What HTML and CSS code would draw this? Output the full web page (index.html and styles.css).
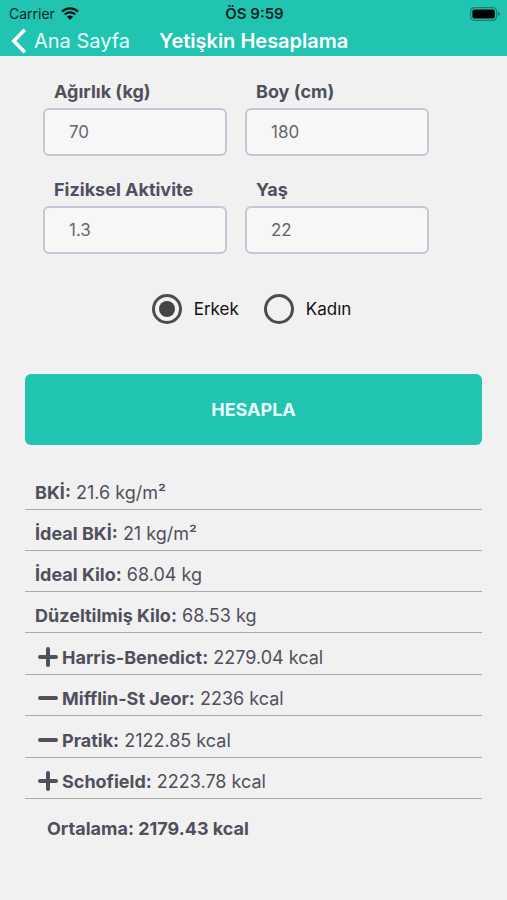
FILE: index.html
```html
<!DOCTYPE html>
<html lang="tr">
<head>
<meta charset="utf-8">
<meta name="viewport" content="width=device-width, initial-scale=1">
<title>Yetişkin Hesaplama</title>
<link rel="stylesheet" href="styles.css">
</head>
<body>
<header class="top">
  <div class="status">
    <div class="carrier">
      <span>Carrier</span>
      <svg class="wifi" viewBox="0 0 18 13" aria-hidden="true">
        <path d="M1 4.6a11.5 11.5 0 0 1 16 0M3.8 7.5a7.5 7.5 0 0 1 10.4 0" fill="none" stroke="#0c1514" stroke-width="2.2"/>
        <path d="M9 13 5.9 9.8a4.4 4.4 0 0 1 6.2 0z" fill="#0c1514"/>
      </svg>
    </div>
    <span class="time">ÖS 9:59</span>
    <svg class="battery" viewBox="0 0 30 14" aria-hidden="true">
      <rect x=".6" y=".6" width="26" height="12.8" rx="4" fill="none" stroke="#128273" stroke-width="1.2"/>
      <rect x="2.4" y="2.4" width="22.4" height="9.2" rx="2" fill="#000"/>
      <path d="M28 4.8q1.8.6 1.8 2.2T28 9.2z" fill="#128273"/>
    </svg>
  </div>
  <nav class="nav">
    <a class="back" href="#">
      <svg class="chevron" viewBox="0 0 16 26" aria-hidden="true"><path d="M13.8 1.8 2.8 13l11 11.2" fill="none" stroke="#fff" stroke-width="3.6"/></svg>
      <span>Ana Sayfa</span>
    </a>
    <h1 class="title">Yetişkin Hesaplama</h1>
  </nav>
</header>
<main>
  <form class="form">
    <div class="fields">
      <div class="field"><label for="weight">Ağırlık (kg)</label><input id="weight" type="text" inputmode="decimal" value="70"></div>
      <div class="field"><label for="height">Boy (cm)</label><input id="height" type="text" inputmode="decimal" value="180"></div>
      <div class="field"><label for="activity">Fiziksel Aktivite</label><input id="activity" type="text" inputmode="decimal" value="1.3"></div>
      <div class="field"><label for="age">Yaş</label><input id="age" type="text" inputmode="numeric" value="22"></div>
    </div>
    <div class="genders">
      <label class="gender"><input type="radio" name="gender" value="male" checked>Erkek</label>
      <label class="gender"><input type="radio" name="gender" value="female">Kadın</label>
    </div>
    <button class="submit" type="button">HESAPLA</button>
  </form>
  <section class="results">
    <div class="row"><p><b>BKİ:</b> 21.6 kg/m²</p></div>
    <div class="row"><p><b>İdeal BKİ:</b> 21 kg/m²</p></div>
    <div class="row"><p><b>İdeal Kilo:</b> 68.04 kg</p></div>
    <div class="row"><p><b>Düzeltilmiş Kilo:</b> 68.53 kg</p></div>
    <div class="formulas">
      <div class="row">
        <button class="toggle" type="button" aria-label="Ekle"><svg viewBox="0 0 20 20"><path d="M2 10h16M10 2v16"/></svg></button>
        <p><b>Harris-Benedict:</b> 2279.04 kcal</p>
      </div>
      <div class="row">
        <button class="toggle" type="button" aria-label="Çıkar"><svg viewBox="0 0 20 20"><path d="M2 10h16"/></svg></button>
        <p><b>Mifflin-St Jeor:</b> 2236 kcal</p>
      </div>
      <div class="row">
        <button class="toggle" type="button" aria-label="Çıkar"><svg viewBox="0 0 20 20"><path d="M2 10h16"/></svg></button>
        <p><b>Pratik:</b> 2122.85 kcal</p>
      </div>
      <div class="row">
        <button class="toggle" type="button" aria-label="Ekle"><svg viewBox="0 0 20 20"><path d="M2 10h16M10 2v16"/></svg></button>
        <p><b>Schofield:</b> 2223.78 kcal</p>
      </div>
    </div>
    <p class="average">Ortalama: 2179.43 kcal</p>
  </section>
</main>
</body>
</html>
```
FILE: styles.css
```css
* { box-sizing: border-box; }

body {
  margin: 0;
  background: #f1f1f1;
  color: #50505c;
  font-family: Inter, "Liberation Sans", sans-serif;
  font-size: 18px;
  line-height: 24px;
}

p, h1 { margin: 0; }

.top { background: #20c4b0; }

.status {
  display: grid;
  grid-template-columns: 1fr auto 1fr;
  align-items: center;
  height: 26px;
  padding: 1px 7px 0 9px;
  color: #0c2521;
  font-size: 14px;
}
.carrier { display: flex; align-items: center; gap: 6px; }
.wifi { width: 18px; height: 13px; }
.time { font-size: 15px; font-weight: 600; }
.battery { width: 30px; height: 14px; justify-self: end; }

.nav {
  display: flex;
  align-items: center;
  gap: 29px;
  height: 30px;
  padding-left: 11px;
  color: #fff;
  font-size: 20px;
}
.back {
  display: flex;
  align-items: center;
  gap: 7px;
  color: #e6fffb;
  text-decoration: none;
}
.chevron { width: 16px; height: 26px; }
.title { font-size: 20px; font-weight: 600; }

.fields {
  display: grid;
  grid-template-columns: 1fr 1fr;
  gap: 22px 18px;
  padding: 24px 78px 0 43px;
}
.field { display: flex; flex-direction: column; gap: 4px; min-width: 0; }
.field label { padding-left: 11px; font-weight: 700; }
.field input {
  width: 100%;
  height: 48px;
  margin: 0;
  padding: 0 24px;
  border: 2px solid #c6c6d6;
  border-radius: 6px;
  background: #f7f7f7;
  color: #66666a;
  font: inherit;
  font-size: 17px;
}

.genders {
  display: flex;
  justify-content: center;
  gap: 25px;
  padding: 40px 4px 50px 0;
}
.gender {
  display: flex;
  align-items: center;
  gap: 12px;
  color: #111;
  font-size: 17px;
}
.gender input {
  appearance: none;
  display: grid;
  place-items: center;
  width: 30px;
  height: 30px;
  margin: 0;
  border: 3px solid #4c4c4c;
  border-radius: 50%;
}
.gender input:checked::before {
  content: "";
  width: 16px;
  height: 16px;
  border-radius: 50%;
  background: #444;
}

.submit {
  display: block;
  width: calc(100% - 50px);
  height: 71px;
  margin: 0 25px;
  border: 0;
  border-radius: 6px;
  background: #20c4b0;
  color: #e9fffb;
  font: inherit;
  font-weight: 700;
}

.results { padding: 24px 25px; }
.row {
  display: flex;
  align-items: flex-end;
  min-height: 41px;
  padding: 0 10px 4px;
  border-bottom: 1px solid #aaa;
}
.row b { font-weight: 700; }
.formulas {
  display: grid;
  grid-auto-rows: 1fr;
  min-height: 166px;
}
.formulas .row { padding-left: 13px; }
.toggle {
  display: flex;
  margin: 0 4px 3px 0;
  padding: 0;
  border: 0;
  background: none;
}
.toggle svg {
  width: 20px;
  height: 20px;
  fill: none;
  stroke: #50505c;
  stroke-width: 4;
  stroke-linecap: round;
}
.average { padding: 18px 22px 0; font-weight: 700; }
```
